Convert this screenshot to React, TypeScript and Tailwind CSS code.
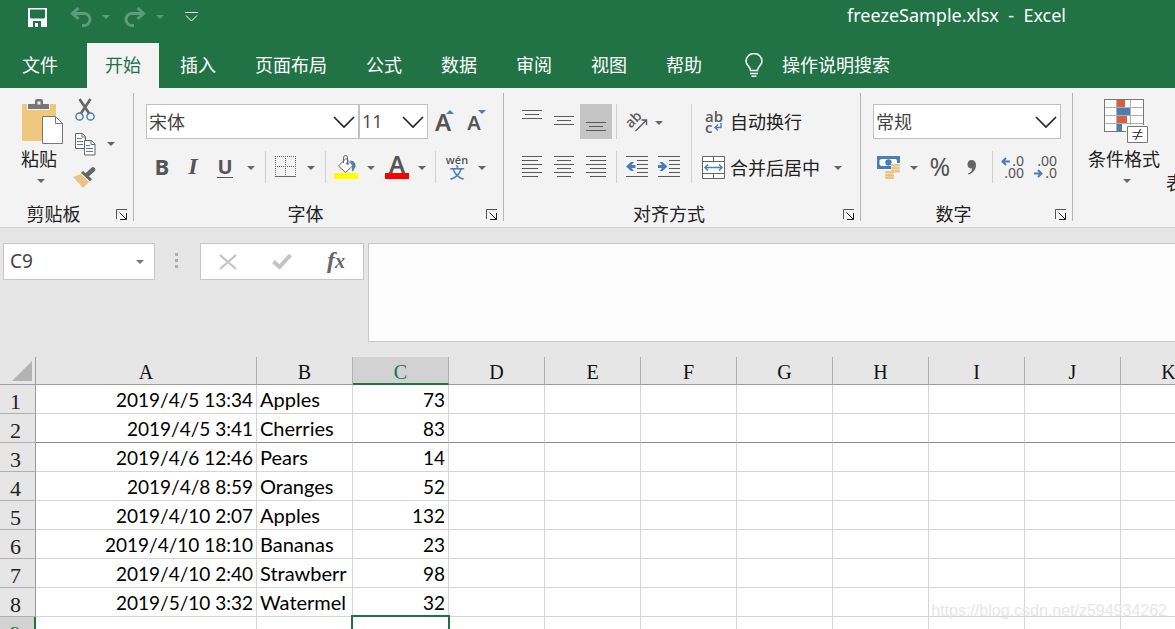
import { useState } from 'react'
import type { ReactNode } from 'react'

const TABS = ['开始', '插入', '页面布局', '公式', '数据', '审阅', '视图', '帮助']

const COLUMNS = ['A', 'B', 'C', 'D', 'E', 'F', 'G', 'H', 'I', 'J', 'K']

const ROWS = [
  ['2019/4/5 13:34', 'Apples', '73'],
  ['2019/4/5 3:41', 'Cherries', '83'],
  ['2019/4/6 12:46', 'Pears', '14'],
  ['2019/4/8 8:59', 'Oranges', '52'],
  ['2019/4/10 2:07', 'Apples', '132'],
  ['2019/4/10 18:10', 'Bananas', '23'],
  ['2019/4/10 2:40', 'Strawberr', '98'],
  ['2019/5/10 3:32', 'Watermel', '32'],
  ['', '', ''],
]

const FROZEN_ROW = 2
const ACTIVE_ROW = 9
const ACTIVE_COL = 'C'

function Caret({ className = 'text-[#666666]' }: { className?: string }) {
  return (
    <svg width="8" height="4" viewBox="0 0 8 4" className={className} aria-hidden="true">
      <path d="M0 0h8L4 4z" fill="currentColor" />
    </svg>
  )
}

function ToolButton({ label, className = 'w-8', children }: { label: string; className?: string; children: ReactNode }) {
  return (
    <button aria-label={label} className={`flex h-full shrink-0 items-center justify-center text-[#555555] hover:bg-[#d5d5d5] ${className}`}>
      {children}
    </button>
  )
}

function MenuButton({ label, className = 'w-[18px]' }: { label: string; className?: string }) {
  return (
    <ToolButton label={label} className={`pt-0.5 ${className}`}>
      <Caret />
    </ToolButton>
  )
}

function Separator({ className = 'mx-[5px]' }: { className?: string }) {
  return <div className={`w-px shrink-0 self-stretch bg-[#cfcfcf] ${className}`} />
}

function Combo({ label, value, options, className }: { label: string; value: string; options: string[]; className: string }) {
  return (
    <div className={`relative h-[35px] shrink-0 ${className}`}>
      <select
        aria-label={label}
        defaultValue={value}
        className="h-full w-full appearance-none border border-[#c0c0c0] bg-white pl-[2px] text-[18px] text-[#444444] outline-none"
      >
        {options.map((o) => (
          <option key={o}>{o}</option>
        ))}
      </select>
      <svg width="22" height="13" viewBox="0 0 22 13" className="pointer-events-none absolute top-3 right-1" aria-hidden="true">
        <path d="M1 1l10 10L21 1" fill="none" stroke="#222222" strokeWidth="1.6" />
      </svg>
    </div>
  )
}

function Group({ title, className, children }: { title: string; className: string; children: ReactNode }) {
  return (
    <>
      <section aria-label={title} className={`flex shrink-0 flex-col justify-between ${className}`}>
        {children}
        <div className="flex h-[26px] items-center">
          <span className="flex-1 pr-0.5 pb-0.5 text-center leading-6">{title}</span>
          <button aria-label={`${title}设置`} className="flex w-6 items-center justify-center pt-0.5 pl-0.5">
            <svg width="12" height="12" viewBox="0 0 12 12" fill="none" stroke="#555555" aria-hidden="true">
              <path d="M.5 10V.5H11" />
              <path d="M3.5 3.5l7 7M10.500 4v6.500H4" stroke="#222222" />
            </svg>
          </button>
        </div>
      </section>
      <div className="mt-[5px] mb-[6px] w-px shrink-0 bg-[#b5b5b5]" />
    </>
  )
}

// each entry is [x, y, width]
function Lines({ rows, height = 22 }: { rows: number[][]; height?: number }) {
  return (
    <svg width="20" height={height} viewBox={`0 0 20 ${height}`} fill="#5a5a5a" aria-hidden="true">
      {rows.map(([x, y, w]) => (
        <rect key={y} x={x} y={y} width={w} height="1" />
      ))}
    </svg>
  )
}

function IndentIcon({ outdent = false }: { outdent?: boolean }) {
  return (
    <svg width="22" height="22" viewBox="0 0 22 22" aria-hidden="true">
      <g fill="#5a5a5a">
        <path d="M0 0h22v1H0zM11 4h11v1H11zM11 8h11v1H11zM11 12h11v1H11zM11 16h11v1H11zM0 20h22v1H0z" />
      </g>
      <path
        d={outdent ? 'M0 10.500L5 6h3L5.500 9H9.500v3H5.500L8 15H5z' : 'M9.500 10.500L4.500 6h-3L4 9H0v3h4l-2.500 3h3z'}
        fill="#4a7fb5"
      />
    </svg>
  )
}

function OrientationIcon() {
  return (
    <svg width="22" height="22" viewBox="0 0 22 22" aria-hidden="true">
      <text
        x="8"
        y="13"
        transform="rotate(-45 8 9)"
        textAnchor="middle"
        fill="#5a5a5a"
        className="font-['Open_Sans',sans-serif] text-[14px] font-semibold"
      >
        ab
      </text>
      <path d="M9.500 20L20 9.500M15.500 9H20.500V14" fill="none" stroke="#5a5a5a" strokeWidth="1.400" />
    </svg>
  )
}

function PasteIcon() {
  return (
    <svg width="42" height="46" viewBox="0 0 42 46" aria-hidden="true">
      <path d="M1 5h32a1 1 0 0 1 1 1v11H20v25H1a1 1 0 0 1-1-1V6a1 1 0 0 1 1-1z" fill="#edc87e" />
      <path d="M5 5h8V2a2 2 0 0 1 2-2h4a2 2 0 0 1 2 2v3h7v6H5z" fill="#f3f3f3" />
      <path d="M6 5h7V2a2 2 0 0 1 2-2h4a2 2 0 0 1 2 2v3h6v5H6zM15.500 2.500v3h3v-3z" fill="#777777" fillRule="evenodd" />
      <path d="M20.500 17.500h13l7 7v20h-20z" fill="#ffffff" stroke="#777777" />
      <path d="M33.500 17.500v7h7" fill="none" stroke="#777777" />
    </svg>
  )
}

function ScissorsIcon() {
  return (
    <svg width="20" height="24" viewBox="0 0 20 24" fill="none" aria-hidden="true">
      <path d="M4.500 1L14.500 16M15.500 1L5.500 16" stroke="#666666" strokeWidth="2.600" />
      <circle cx="4.500" cy="18.500" r="3.600" stroke="#4a7fb5" strokeWidth="1.500" />
      <circle cx="15.500" cy="18.500" r="3.600" stroke="#4a7fb5" strokeWidth="1.500" />
    </svg>
  )
}

function CopyIcon() {
  return (
    <svg width="21" height="23" viewBox="0 0 21 23" aria-hidden="true">
      <path d="M.5.5h7l3 3v12H.5z" fill="#ffffff" stroke="#666666" />
      <path d="M7 .5v3.500h3.500" fill="none" stroke="#666666" />
      <path d="M2 5h5v1H2zM2 8h6v1H2zM2 11h6v1H2z" fill="#4a7fb5" />
      <path d="M9.500 7.500h7l3.500 3.500v11H9.500z" fill="#ffffff" stroke="#666666" />
      <path d="M16 7.500v4h4" fill="none" stroke="#666666" />
      <path d="M11 12h4v1h-4zM11 15h7v1h-7zM11 18h7v1h-7z" fill="#4a7fb5" />
    </svg>
  )
}

function BrushIcon() {
  return (
    <svg width="24" height="22" viewBox="0 0 24 22" aria-hidden="true">
      <path d="M0 10l8-3 8 8-6 6z" fill="#ebc384" />
      <path d="M8 6l2-2 9 8-2 2.500z" fill="#666666" />
      <path d="M14.500 7.500L20 2.500" stroke="#666666" strokeWidth="4.500" strokeLinecap="round" />
      <path d="M7.500 6.500l9.500 8.500" stroke="#f3f3f3" />
    </svg>
  )
}

function BordersIcon() {
  return (
    <svg width="22" height="22" viewBox="0 0 22 22" fill="none" stroke="#666666" aria-hidden="true">
      <path d="M0 .5h21M0 10.500h21M.5 0v20M10.500 0v20M20.500 0v20" strokeDasharray="1 1" />
      <path d="M0 20.500h21" />
    </svg>
  )
}

function FillIcon() {
  return (
    <svg width="24" height="24" viewBox="0 0 24 24" aria-hidden="true">
      <path d="M16 5.500c4 0 6 3 5.500 6l-2.500 5c-1.500 0-1-4-1-6z" fill="#4a7fb5" />
      <path d="M4.500 11L12 3.500l7 7-7.500 7z" fill="#ffffff" stroke="#666666" />
      <path d="M9.500 8V2.500q0-2 2-2t2 2V8" fill="none" stroke="#666666" />
      <circle cx="13.500" cy="8.500" r="1.300" fill="#666666" />
      <path d="M0 18h24v6H0z" fill="#ffff00" />
    </svg>
  )
}

function MergeIcon() {
  return (
    <svg width="24" height="23" viewBox="0 0 24 23" fill="none" stroke="#666666" aria-hidden="true">
      <path d="M.5.5h22v22H.5z" fill="#ffffff" />
      <path d="M0 5.500h23M0 17.500h23M11.500 0v5M11.500 18v5" />
      <path d="M3 11.500h17M6 8.500l-3 3 3 3M17 8.500l3 3-3 3" stroke="#4a7fb5" strokeWidth="1.500" />
    </svg>
  )
}

function CurrencyIcon() {
  return (
    <svg width="24" height="23" viewBox="0 0 24 23" aria-hidden="true">
      <path d="M0 0h23v13H0z" fill="#4a7fb5" />
      <path d="M4 3h15l1 1.500v4L18 10H4L2.500 8.500v-4z" fill="#ffffff" />
      <circle cx="11.500" cy="6.500" r="3.200" fill="#4a7fb5" />
      <path d="M14 7h10v10h-6v6H8v-8h6z" fill="#f3f3f3" />
      <g fill="#ebc384">
        <rect x="14" y="8" width="9" height="2.500" rx="1" />
        <rect x="14" y="11" width="9" height="2.500" rx="1" />
        <rect x="14" y="14" width="9" height="2.500" rx="1" />
        <rect x="8" y="15" width="9" height="2.500" rx="1" />
        <rect x="8" y="18" width="9" height="2.500" rx="1" />
        <rect x="8" y="20.500" width="9" height="2.500" rx="1" />
      </g>
    </svg>
  )
}

function ConditionalIcon() {
  return (
    <svg width="45" height="46" viewBox="0 0 45 46" aria-hidden="true">
      <path d="M.5.5h39v32H.5z" fill="#ffffff" stroke="#777777" />
      <path d="M0 8.500h40M0 16.500h40M0 24.500h40M12.500 0v33M26.500 0v33" stroke="#b0b0b0" />
      <path d="M13 1h8v7h-8zM13 17h10v7H13z" fill="#d9603f" />
      <path d="M13 9h13v7H13zM13 25h5v7h-5z" fill="#4a7fb5" />
      <path d="M.5.5h39v32H.5z" fill="none" stroke="#777777" />
      <path d="M22 26h22v19H22z" fill="#f3f3f3" />
      <path d="M23.500 27.500h20v16h-20z" fill="#ffffff" stroke="#777777" />
      <path d="M28.500 33.500h10M28.500 37.500h10M36.500 30l-5 11" stroke="#444444" strokeWidth="1.200" />
    </svg>
  )
}

function DecimalArrow({ left = false }: { left?: boolean }) {
  return (
    <svg width="9" height="9" viewBox="0 0 9 9" fill="none" stroke="#4a7fb5" strokeWidth="2" aria-hidden="true">
      <path d={left ? 'M9 4.500H1.500M5 1L1.500 4.500 5 8' : 'M0 4.500h7.500M4 1l3.500 3.500L4 8'} />
    </svg>
  )
}

function TitleBar() {
  return (
    <header className="flex h-[43px] items-start justify-between pl-7 text-white">
      <div className="flex h-[34px] items-center">
        <button aria-label="保存" className="w-[19px]">
          <svg width="19" height="19" viewBox="0 0 19 19" aria-hidden="true">
            <path d="M0 0h19v19H0zM2 1.500v8l1 1h13l1-1v-8zM5 13v6h8v-6z" fill="currentColor" fillRule="evenodd" />
            <path d="M7 15h3v4H7z" fill="currentColor" />
          </svg>
        </button>
        <button aria-label="撤消" className="ml-[23px] text-[#5f9b7a]">
          <svg width="22" height="20" viewBox="0 0 22 20" fill="none" stroke="currentColor" strokeWidth="3" aria-hidden="true">
            <path d="M2 6.500h12a5.500 5.500 0 0 1 0 12h-2M8.500 1L2.500 6.500l6 5.500" />
          </svg>
        </button>
        <button aria-label="撤消列表" className="ml-2.5 text-[#5f9b7a]">
          <Caret className="" />
        </button>
        <button aria-label="恢复" className="ml-3.5 text-[#5f9b7a]">
          <svg width="22" height="20" viewBox="0 0 22 20" fill="none" stroke="currentColor" strokeWidth="3" aria-hidden="true">
            <path d="M20 6.500H8a5.500 5.500 0 0 0 0 12h2M13.500 1l6 5.500-6 5.500" />
          </svg>
        </button>
        <button aria-label="恢复列表" className="ml-2.5 text-[#5f9b7a]">
          <Caret className="" />
        </button>
        <button aria-label="自定义快速访问工具栏" className="ml-[21px]">
          <svg width="13" height="10" viewBox="0 0 13 10" fill="none" stroke="currentColor" aria-hidden="true">
            <path d="M0 .5h13M1 3.500l5.500 5.500L12 3.500" />
          </svg>
        </button>
      </div>
      <h1 className="mr-[109px] font-['Noto_Sans',sans-serif] text-[18px] leading-[30px] whitespace-pre">
        {'freezeSample.xlsx  -  Excel'}
      </h1>
    </header>
  )
}

function TabBar() {
  const [active, setActive] = useState('开始')
  return (
    <nav className="flex h-[45px] gap-[3px] text-white">
      <button className="w-[84px] shrink-0 px-[22px] pb-0.5 text-left">文件</button>
      {TABS.map((t) => (
        <button
          key={t}
          onClick={() => setActive(t)}
          className={`shrink-0 px-[18px] pb-0.5 ${active === t ? 'bg-[#f3f3f3] text-[#217346]' : 'hover:bg-[#185c37]'}`}
        >
          {t}
        </button>
      ))}
      <label className="flex min-w-0 flex-1 items-center gap-[19px] pb-0.5 pl-[22px]">
        <svg width="18" height="24" viewBox="0 0 18 24" fill="none" stroke="currentColor" strokeWidth="1.500" aria-hidden="true">
          <path d="M5.500 17.500c0-4-4.500-5-4.500-9.500a8 7.500 0 0 1 16 0c0 4.500-4.500 5.500-4.500 9.500zM5 20.500h8M6.500 23.200h5" />
        </svg>
        <input aria-label="操作说明搜索" placeholder="操作说明搜索" className="min-w-0 flex-1 bg-transparent outline-none placeholder:text-white" />
      </label>
    </nav>
  )
}

function ClipboardGroup() {
  return (
    <Group title="剪贴板" className="w-[133px]">
      <div className="flex pt-2.5 pl-[18px]">
        <button className="flex w-[42px] flex-col items-center">
          <span className="pt-px pl-2">
            <PasteIcon />
          </span>
          <span className="leading-[26px] whitespace-nowrap">粘贴</span>
          <span className="pt-2 pl-1">
            <Caret />
          </span>
        </button>
        <div className="ml-[13px] flex w-6 flex-col items-center gap-[11px]">
          <button aria-label="剪切">
            <ScissorsIcon />
          </button>
          <button aria-label="复制">
            <CopyIcon />
          </button>
          <button aria-label="格式刷">
            <BrushIcon />
          </button>
        </div>
        <button aria-label="复制选项" className="ml-2.5 self-center">
          <Caret />
        </button>
      </div>
    </Group>
  )
}

function FontGroup() {
  return (
    <Group title="字体" className="w-[369px]">
      <div className="flex flex-col gap-3 pt-4 pl-3">
        <div className="flex h-[35px] items-center">
          <Combo label="字体" value="宋体" options={['宋体', '黑体', '楷体']} className="w-[213px]" />
          <Combo label="字号" value="11" options={['9', '10', '11', '12', '14']} className="w-[69px] font-['Open_Sans',sans-serif]" />
          <ToolButton label="增大字号" className="relative w-[30px] font-['Noto_Sans',sans-serif] text-[24px] font-semibold">
            A
            <svg width="8" height="4" viewBox="0 0 8 4" className="absolute top-1.5 right-1" aria-hidden="true">
              <path d="M0 4h8L4 0z" fill="#4a7fb5" />
            </svg>
          </ToolButton>
          <ToolButton label="减小字号" className="relative w-8 pt-0.5 font-['Noto_Sans',sans-serif] text-[20px] font-semibold">
            A
            <svg width="8" height="4" viewBox="0 0 8 4" className="absolute top-1.5 right-1" aria-hidden="true">
              <path d="M0 0h8L4 4z" fill="#4a7fb5" />
            </svg>
          </ToolButton>
        </div>
        <div className="flex h-8 items-center">
          <ToolButton label="加粗" className="w-8 pb-0.5 font-['Open_Sans',sans-serif] text-[22px] font-bold">B</ToolButton>
          <ToolButton label="倾斜" className="w-[30px] pb-0.5 font-['Liberation_Serif',serif] text-[24px] font-bold italic">I</ToolButton>
          <ToolButton label="下划线" className="w-[34px] font-['Open_Sans',sans-serif] text-[20px] font-bold">
            <span className="border-b border-[#555555] leading-5">U</span>
          </ToolButton>
          <MenuButton label="下划线选项" />
          <Separator />
          <ToolButton label="边框" className="w-[30px]">
            <BordersIcon />
          </ToolButton>
          <MenuButton label="边框选项" className="w-5" />
          <Separator className="mx-1" />
          <ToolButton label="填充颜色">
            <FillIcon />
          </ToolButton>
          <MenuButton label="填充颜色选项" />
          <ToolButton label="字体颜色" className="w-[34px] font-['Noto_Sans',sans-serif] text-[24px] font-semibold">
            <span className="h-6 w-6 border-b-6 border-[#ff0000] text-center leading-[18px]">A</span>
          </ToolButton>
          <MenuButton label="字体颜色选项" className="w-4" />
          <Separator />
          <ToolButton label="拼音" className="w-8 flex-col">
            <span className="font-['Open_Sans',sans-serif] text-[11px] leading-[9px] font-semibold">wén</span>
            <span className="text-[15px] leading-4 font-medium text-[#4a7fb5]">文</span>
          </ToolButton>
          <MenuButton label="拼音选项" />
        </div>
      </div>
    </Group>
  )
}

function AlignGroup() {
  return (
    <Group title="对齐方式" className="w-[356px]">
      <div className="flex pt-4 pl-3">
        <div className="flex flex-col gap-3">
          <div className="flex h-[35px] items-center">
            <ToolButton label="顶端对齐">
              <Lines rows={[[0, 4, 20], [3, 8, 14], [0, 12, 20]]} height={32} />
            </ToolButton>
            <ToolButton label="垂直居中">
              <Lines rows={[[0, 10, 20], [3, 14, 14], [0, 18, 20]]} height={32} />
            </ToolButton>
            <ToolButton label="底端对齐" className="w-8 bg-[#c5c5c5]">
              <Lines rows={[[0, 16, 20], [3, 20, 14], [0, 24, 20]]} height={32} />
            </ToolButton>
            <Separator className="mx-1" />
            <ToolButton label="方向">
              <OrientationIcon />
            </ToolButton>
            <MenuButton label="方向选项" className="w-3" />
          </div>
          <div className="flex h-8 items-center">
            <ToolButton label="左对齐">
              <Lines rows={[[0, 0, 20], [0, 4, 16], [0, 8, 20], [0, 12, 16], [0, 16, 20], [0, 20, 16]]} />
            </ToolButton>
            <ToolButton label="居中">
              <Lines rows={[[0, 0, 20], [3, 4, 14], [0, 8, 20], [3, 12, 14], [0, 16, 20], [3, 20, 14]]} />
            </ToolButton>
            <ToolButton label="右对齐">
              <Lines rows={[[0, 0, 20], [4, 4, 16], [0, 8, 20], [4, 12, 16], [0, 16, 20], [4, 20, 16]]} />
            </ToolButton>
            <Separator className="mx-1" />
            <ToolButton label="减少缩进量">
              <IndentIcon outdent />
            </ToolButton>
            <ToolButton label="增加缩进量">
              <IndentIcon />
            </ToolButton>
          </div>
        </div>
        <Separator className="mx-1.5" />
        <div className="flex flex-col gap-3">
          <button className="flex h-[35px] items-center">
            <span className="flex w-8 flex-col pl-[7px] text-left font-['Open_Sans',sans-serif] text-[15px] leading-[11px] font-semibold text-[#5a5a5a]">
              <span>ab</span>
              <span className="flex items-center gap-0.5">
                c
                <svg width="8" height="8" viewBox="0 0 8 8" fill="none" stroke="#4a7fb5" strokeWidth="1.400" aria-hidden="true">
                  <path d="M7 0v4.500H1M4 1.500l-3 3 3 3" />
                </svg>
              </span>
            </span>
            自动换行
          </button>
          <div className="flex h-8 items-center">
            <button className="flex items-center">
              <span className="w-8 pl-1">
                <MergeIcon />
              </span>
              合并后居中
            </button>
            <MenuButton label="合并选项" className="ml-[9px] w-[18px]" />
          </div>
        </div>
      </div>
    </Group>
  )
}

function NumberGroup() {
  return (
    <Group title="数字" className="w-[211px]">
      <div className="flex flex-col gap-3 pt-4 pl-3">
        <Combo label="数字格式" value="常规" options={['常规', '数值', '货币', '日期']} className="w-[188px]" />
        <div className="flex h-8 items-center">
          <ToolButton label="会计数字格式">
            <CurrencyIcon />
          </ToolButton>
          <MenuButton label="会计数字格式选项" />
          <ToolButton label="百分比样式" className="w-[34px] font-['Noto_Sans',sans-serif] text-[25px]">%</ToolButton>
          <ToolButton label="千位分隔样式" className="w-[30px]">
            <svg width="10" height="15" viewBox="0 0 10 15" fill="#666666" aria-hidden="true">
              <path d="M4.500 0C7.500 0 9 2 9 5c0 5-3.500 8.500-7.500 9.500L1 13.500C4 12.500 5 10.500 5 8.500 2.500 9 .5 7 .5 4.500.5 2 2 0 4.500 0z" />
            </svg>
          </ToolButton>
          <Separator />
          <ToolButton label="增加小数位数" className="w-7 flex-col font-['Noto_Sans',sans-serif] text-[14px] leading-3">
            <span className="flex w-6 items-center justify-end gap-0.5">
              <DecimalArrow left />
              .0
            </span>
            <span className="w-6 text-right">.00</span>
          </ToolButton>
          <ToolButton label="减少小数位数" className="w-[38px] flex-col font-['Noto_Sans',sans-serif] text-[14px] leading-3">
            <span className="w-6 text-right">.00</span>
            <span className="flex w-6 items-center justify-end gap-0.5">
              <DecimalArrow />
              .0
            </span>
          </ToolButton>
        </div>
      </div>
    </Group>
  )
}

function Ribbon() {
  return (
    <div className="flex h-[140px] overflow-hidden border-b border-[#d0d0d0] bg-[#f3f3f3] text-[#222222]">
      <ClipboardGroup />
      <FontGroup />
      <AlignGroup />
      <NumberGroup />
      <div className="flex shrink-0 gap-1.5 pt-2.5 pl-[15px]">
        <button className="flex flex-col items-center self-start">
          <span className="pt-px pl-1">
            <ConditionalIcon />
          </span>
          <span className="leading-[26px]">条件格式</span>
          <span className="pt-2 pl-1.5">
            <Caret />
          </span>
        </button>
        <button className="self-start pt-[74px] leading-5">表格格式</button>
      </div>
    </div>
  )
}

function FormulaBar() {
  return (
    <div className="flex items-start pt-[15px] pl-[3px]">
      <div className="flex h-[37px] w-[152px] shrink-0 items-center border border-[#c6c6c6] bg-white">
        <input
          aria-label="名称框"
          defaultValue="C9"
          className="min-w-0 flex-1 bg-transparent pl-1.5 font-['Noto_Sans',sans-serif] text-[19px] text-[#444444] outline-none"
        />
        <button aria-label="名称列表" className="flex w-7 justify-center self-stretch pt-4">
          <Caret className="text-[#777777]" />
        </button>
      </div>
      <div className="flex h-[37px] w-[45px] shrink-0 flex-col items-center justify-center gap-[3px] pr-0.5 pb-0.5">
        <i className="h-[3px] w-[3px] bg-[#b0b0b0]" />
        <i className="h-[3px] w-[3px] bg-[#b0b0b0]" />
        <i className="h-[3px] w-[3px] bg-[#b0b0b0]" />
      </div>
      <div className="flex h-[37px] w-[164px] shrink-0 items-center border border-[#c6c6c6] bg-white">
        <button aria-label="取消" className="flex flex-1 justify-center">
          <svg width="18" height="16" viewBox="0 0 18 16" fill="none" stroke="#c3c3c3" strokeWidth="2.200" aria-hidden="true">
            <path d="M1 1l16 14M17 1L1 15" />
          </svg>
        </button>
        <button aria-label="输入" className="flex flex-1 justify-center">
          <svg width="20" height="17" viewBox="0 0 20 17" fill="none" stroke="#c3c3c3" strokeWidth="4" aria-hidden="true">
            <path d="M1.500 8.500L7.500 14 18.500 2" />
          </svg>
        </button>
        <button aria-label="插入函数" className="flex-1 pb-0.5 font-['Liberation_Serif',serif] text-[20px] leading-8 font-bold text-[#666666] italic">
          <span className="text-[24px]">f</span>x
        </button>
      </div>
      <textarea aria-label="编辑栏" className="ml-1 h-[99px] min-w-0 flex-1 resize-none border border-r-0 border-[#c6c6c6] bg-[#fdfdfd] p-1 outline-none" />
    </div>
  )
}

function Sheet() {
  return (
    <div className="mt-[15px] min-h-0 flex-1 overflow-hidden">
      <table className="w-[1217px] table-fixed border-separate border-spacing-0">
        <colgroup>
          <col className="w-9" />
          <col className="w-[221px]" />
          {COLUMNS.slice(1).map((c) => (
            <col key={c} className="w-24" />
          ))}
        </colgroup>
        <thead>
          <tr className="h-7 font-['Liberation_Serif',serif] text-[20px] leading-[23px]">
            <td className="border-r border-b border-[#9c9c9c] p-0">
              <svg width="20" height="20" viewBox="0 0 20 20" className="ml-auto mr-[3px]" aria-hidden="true">
                <path d="M20 0v20H0z" fill="#b3b3b3" />
              </svg>
            </td>
            {COLUMNS.map((c) => (
              <th
                key={c}
                scope="col"
                className={`p-0 pt-1 font-normal ${
                  c === ACTIVE_COL
                    ? 'border-r border-b-2 border-r-[#b0b0b0] border-b-[#217346] bg-[#d2d2d2] leading-[22px] text-[#217346]'
                    : 'border-r border-b border-r-[#b0b0b0] border-b-[#9c9c9c] text-[#111111]'
                }`}
              >
                {c}
              </th>
            ))}
          </tr>
        </thead>
        <tbody className="bg-white">
          {ROWS.map((row, i) => {
            const n = i + 1
            const line = n === FROZEN_ROW ? 'border-b-[#8c8c8c]' : 'border-b-[#d4d4d4]'
            return (
              <tr key={n} className="h-[29px] font-['Lato',sans-serif] text-[19px] leading-[26px] text-black">
                <th
                  scope="row"
                  className={`border-b border-b-[#b0b0b0] p-0 pt-1.5 pr-1 font-['Liberation_Serif',serif] text-[22px] leading-[22px] font-normal ${
                    n === ACTIVE_ROW
                      ? 'border-r-2 border-r-[#217346] bg-[#d2d2d2] text-[#217346]'
                      : 'border-r border-r-[#9c9c9c] bg-[#e6e6e6] text-[#222222]'
                  }`}
                >
                  {n}
                </th>
                {COLUMNS.map((c, j) => (
                  <td
                    key={c}
                    className={`relative border-r border-b border-r-[#d4d4d4] p-0 px-[3px] ${line} ${
                      j === 1 ? 'py-px pr-0 text-left text-[20px]' : 'pt-0.5 text-right'
                    }`}
                  >
                    <div className="overflow-hidden whitespace-nowrap">{row[j]}</div>
                    {n === ACTIVE_ROW && c === ACTIVE_COL && (
                      <div className="absolute -top-0.5 -right-0.5 bottom-0 -left-0.5 border-2 border-[#217346]" />
                    )}
                  </td>
                ))}
              </tr>
            )
          })}
        </tbody>
      </table>
    </div>
  )
}

export default function App() {
  return (
    <div className="relative flex h-screen flex-col overflow-hidden bg-[#e6e6e6] font-['Noto_Sans_CJK_SC',sans-serif] text-[18px]">
      <div className="shrink-0 bg-[#217346]">
        <TitleBar />
        <TabBar />
      </div>
      <Ribbon />
      <FormulaBar />
      <Sheet />
      <span className="pointer-events-none absolute right-2 bottom-2 font-['Liberation_Sans',sans-serif] text-[16px] leading-5 text-[#e6e6e6]">
        https://blog.csdn.net/z594934262
      </span>
    </div>
  )
}
